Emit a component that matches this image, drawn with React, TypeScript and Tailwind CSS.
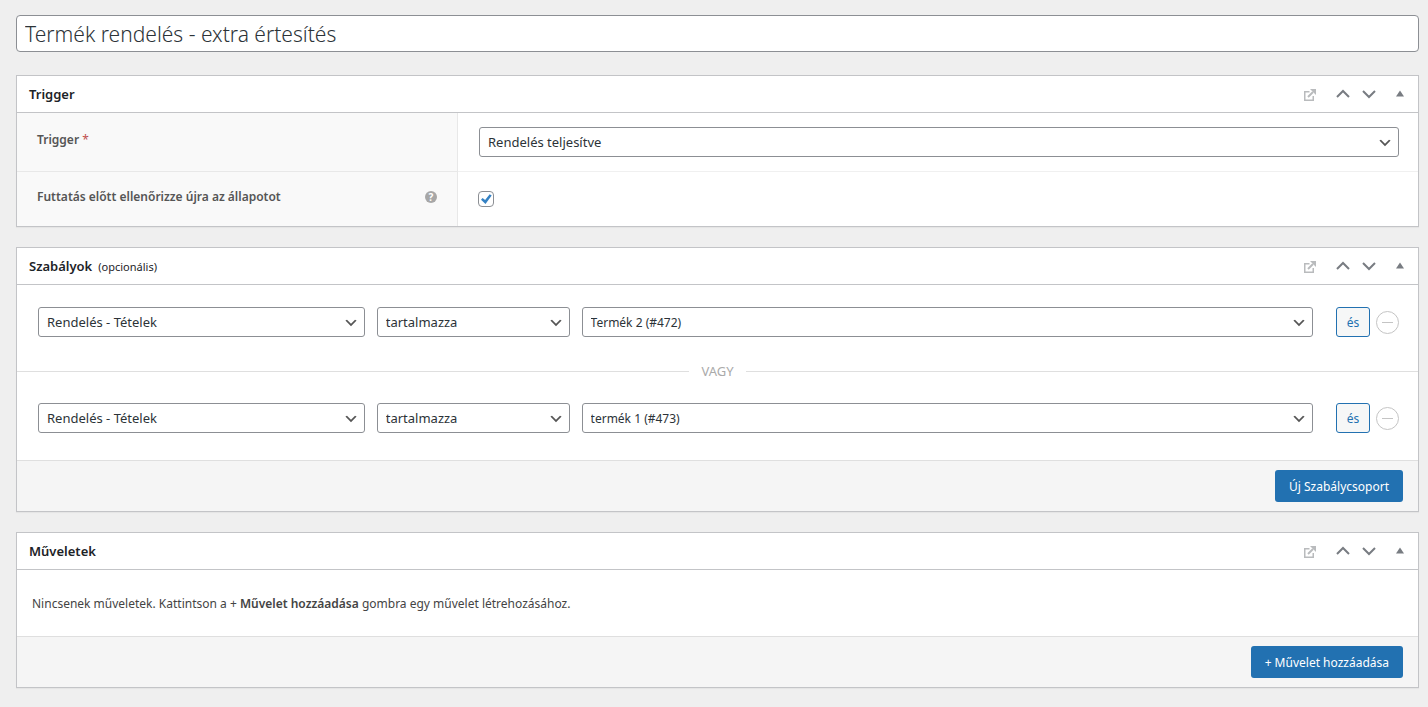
import { useState, type ReactNode } from "react";

const font = "font-['Noto_Sans','Open_Sans',sans-serif]";

type SelectProps = {
  label: string;
  value: string;
  className?: string;
};

function Select({ label, value, className = "text-[13px]" }: SelectProps) {
  return (
    <div className="relative w-full min-w-0">
      <select
        aria-label={label}
        defaultValue={value}
        className={`block h-[30px] w-full appearance-none rounded-[3px] border border-[#8c8f94] bg-white pt-0.5 pr-6 pl-2 text-[#2c3338] ${className}`}
      >
        <option>{value}</option>
      </select>
      <svg viewBox="0 0 20 20" className="pointer-events-none absolute top-2 right-[6px] size-4">
        <path d="M5 6l5 5 5-5 2 1-7 7-7-7 2-1z" fill="#555" />
      </svg>
    </div>
  );
}

function PanelIcons() {
  return (
    <div className="flex items-center">
      <a href="#docs" aria-label="Dokumentáció" className="mr-5 pt-0.5">
        <svg viewBox="0 0 12 12" className="size-3" fill="none" stroke="#b9bbbd">
          <path d="M5.5 2.75H.75v8.5h8.5V7" strokeWidth="1.5" />
          <path d="M4 8l5-5" strokeWidth="2" />
          <path d="M6 0h6v6l-2-2-2-2z" fill="#b9bbbd" stroke="none" />
        </svg>
      </a>
      <button type="button" aria-label="Fel" className="mr-3">
        <svg viewBox="0 0 14 14" className="size-3.5" fill="none" stroke="#787c82" strokeWidth="2">
          <path d="M1 10l6-6 6 6" />
        </svg>
      </button>
      <button type="button" aria-label="Le" className="mr-5">
        <svg viewBox="0 0 14 14" className="size-3.5" fill="none" stroke="#787c82" strokeWidth="2">
          <path d="M1 4l6 6 6-6" />
        </svg>
      </button>
      <button type="button" aria-label="Összecsukás">
        <svg viewBox="0 0 8 8" className="size-2" fill="#787c82">
          <path d="M0 6.5l4-6 4 6z" />
        </svg>
      </button>
    </div>
  );
}

function Panel({ title, note, children }: { title: string; note?: string; children: ReactNode }) {
  return (
    <section className="mb-5 border border-[#c3c4c7] bg-white shadow-[0_1px_1px_rgba(0,0,0,0.04)]">
      <header className="flex h-[37px] items-center justify-between border-b border-[#c3c4c7] pr-[14px] pl-3">
        <h2 className="pt-0.5 text-[13px] font-semibold text-[#1d2327]">
          {title}
          {note && <span className="ml-[6px] text-[11px] font-normal">{note}</span>}
        </h2>
        <PanelIcons />
      </header>
      {children}
    </section>
  );
}

function PanelFooter({ children }: { children: ReactNode }) {
  return (
    <footer className="flex justify-end border-t border-[#dfdfdf] bg-[#f5f5f5] px-[15px] py-[9px]">
      <button type="button" className="h-8 rounded-[3px] bg-[#2271b1] px-[14px] pt-0.5 text-[12px] text-white">
        {children}
      </button>
    </footer>
  );
}

function Rule({ product }: { product: string }) {
  return (
    <div className="flex items-center pr-[19px] pl-[21px]">
      <div className="grid flex-1 grid-cols-[327fr_193fr_732fr] gap-3">
        <Select label="Szabály" value="Rendelés - Tételek" />
        <Select label="Összehasonlítás" value="tartalmazza" />
        <Select label="Termék" value={product} className="text-[12px]" />
      </div>
      <button
        type="button"
        className="ml-[23px] h-[30px] w-[34px] rounded-[3px] border border-[#2271b1] bg-[#f6f7f7] pt-0.5 text-[12px] text-[#2271b1]"
      >
        és
      </button>
      <button type="button" aria-label="Szabály törlése" className="ml-[6px]">
        <svg viewBox="0 0 23 23" className="size-[23px]" fill="none" stroke="#c4c4c4">
          <circle cx="11.5" cy="11.5" r="11" />
          <path d="M6 11.5h11" />
        </svg>
      </button>
    </div>
  );
}

export default function App() {
  const [title, setTitle] = useState("Termék rendelés - extra értesítés");
  const [recheck, setRecheck] = useState(true);

  return (
    <main className={`min-h-screen bg-[#efefef] pt-[15px] pr-[9px] pl-4 text-[13px] text-[#444] ${font}`}>
      <input
        aria-label="Cím"
        value={title}
        onChange={(e) => setTitle(e.target.value)}
        className="mb-[23px] block h-[37px] w-full rounded-[4px] border border-[#8c8f94] bg-white px-2 text-[21px] font-light text-[#2c3338]"
      />

      <Panel title="Trigger">
        <div className="grid grid-cols-[441fr_960fr]">
          <div className="h-[59px] border-r border-b border-[#e8e8e8] bg-[#f9f9f9] px-5 pt-[17px]">
            <span className="text-[12px] font-semibold text-[#555]">
              Trigger <span className="font-normal text-[#c0504d]">*</span>
            </span>
          </div>
          <div className="border-b border-[#f0f0f0] pt-[14px] pr-[19px] pl-[21px]">
            <Select label="Trigger" value="Rendelés teljesítve" />
          </div>
          <div className="flex h-[54px] items-center justify-between border-r border-[#e8e8e8] bg-[#f9f9f9] pr-5 pb-1 pl-5">
            <label htmlFor="recheck" className="text-[12px] font-semibold text-[#555]">
              Futtatás előtt ellenőrizze újra az állapotot
            </label>
            <span className="flex size-3 items-center justify-center rounded-full bg-[#a7a7a7] text-[10px] leading-3 font-bold text-white">
              ?
            </span>
          </div>
          <div className="flex items-center pl-5">
            <span className="relative size-4">
              <input
                id="recheck"
                type="checkbox"
                checked={recheck}
                onChange={(e) => setRecheck(e.target.checked)}
                className="block size-4 appearance-none rounded-[4px] border border-[#8c8f94] bg-white"
              />
              {recheck && (
                <svg viewBox="0 0 16 16" className="pointer-events-none absolute inset-0 size-4" fill="#3582c4">
                  <path d="M11.7 3.2l2 1.3L7.5 13 3 8.8l1.6-1.9 2.5 2z" />
                </svg>
              )}
            </span>
          </div>
        </div>
      </Panel>

      <Panel title="Szabályok" note="(opcionális)">
        <div className="pt-[22px] pb-[27px]">
          <Rule product="Termék 2 (#472)" />
          <div className="flex h-[66px] items-center gap-3 pt-0.5 text-[#aaa]">
            <span className="h-px flex-1 bg-[#dfdfdf]" />
            <span className="pt-0.5">VAGY</span>
            <span className="h-px flex-1 bg-[#dfdfdf]" />
          </div>
          <Rule product="termék 1 (#473)" />
        </div>
        <PanelFooter>Új Szabálycsoport</PanelFooter>
      </Panel>

      <Panel title="Műveletek">
        <p className="flex h-[66px] items-center px-[15px] pt-0.5 text-[12px]">
          <span>
            Nincsenek műveletek. Kattintson a + <strong className="font-semibold">Művelet hozzáadása</strong> gombra egy
            művelet létrehozásához.
          </span>
        </p>
        <PanelFooter>+ Művelet hozzáadása</PanelFooter>
      </Panel>
    </main>
  );
}
